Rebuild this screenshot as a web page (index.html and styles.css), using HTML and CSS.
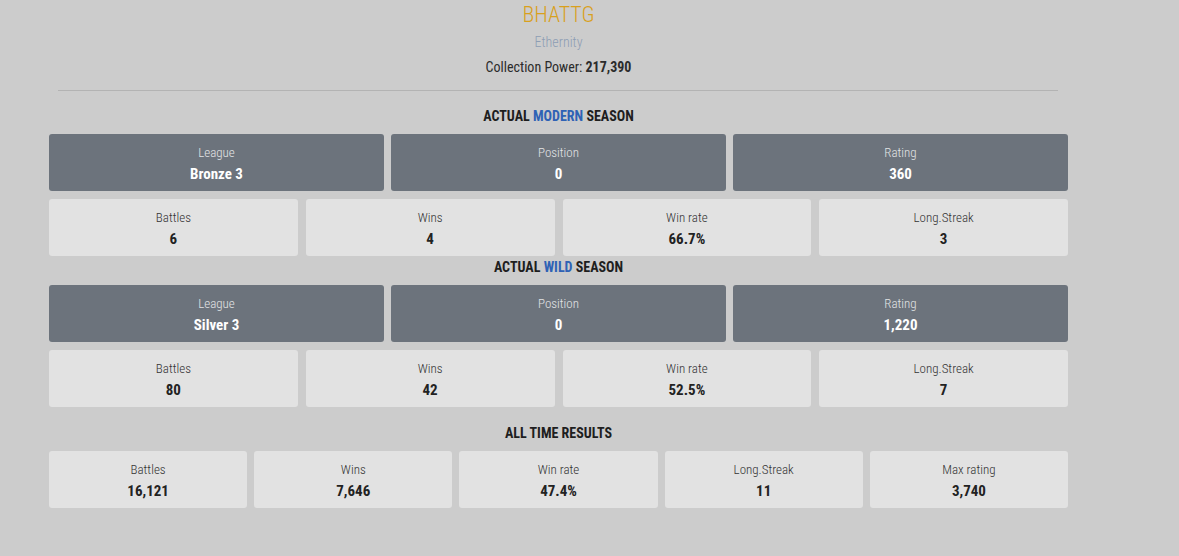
FILE: index.html
```html
<!DOCTYPE html>
<html>
<head>
<meta charset="utf-8">
<link rel="stylesheet" href="styles.css">
</head>
<body>
<div class="page">
  <div class="profile">
    <div class="name">BHATTG</div>
    <div class="guild">Ethernity</div>
    <div class="power">Collection Power: <b>217,390</b></div>
  </div>
  <div class="rule"></div>

  <section class="season">
    <h2 class="heading">ACTUAL <span class="hl">MODERN</span> SEASON</h2>
    <div class="row row-3">
      <div class="card dark"><div class="label">League</div><div class="value">Bronze 3</div></div>
      <div class="card dark"><div class="label">Position</div><div class="value">0</div></div>
      <div class="card dark"><div class="label">Rating</div><div class="value">360</div></div>
    </div>
    <div class="row row-4">
      <div class="card light"><div class="label">Battles</div><div class="value">6</div></div>
      <div class="card light"><div class="label">Wins</div><div class="value">4</div></div>
      <div class="card light"><div class="label">Win rate</div><div class="value">66.7%</div></div>
      <div class="card light"><div class="label">Long.Streak</div><div class="value">3</div></div>
    </div>
  </section>

  <section class="season tight">
    <h2 class="heading">ACTUAL <span class="hl">WILD</span> SEASON</h2>
    <div class="row row-3">
      <div class="card dark"><div class="label">League</div><div class="value">Silver 3</div></div>
      <div class="card dark"><div class="label">Position</div><div class="value">0</div></div>
      <div class="card dark"><div class="label">Rating</div><div class="value">1,220</div></div>
    </div>
    <div class="row row-4">
      <div class="card light"><div class="label">Battles</div><div class="value">80</div></div>
      <div class="card light"><div class="label">Wins</div><div class="value">42</div></div>
      <div class="card light"><div class="label">Win rate</div><div class="value">52.5%</div></div>
      <div class="card light"><div class="label">Long.Streak</div><div class="value">7</div></div>
    </div>
  </section>

  <section class="season alltime">
    <h2 class="heading">ALL TIME RESULTS</h2>
    <div class="row row-5">
      <div class="card light"><div class="label">Battles</div><div class="value">16,121</div></div>
      <div class="card light"><div class="label">Wins</div><div class="value">7,646</div></div>
      <div class="card light"><div class="label">Win rate</div><div class="value">47.4%</div></div>
      <div class="card light"><div class="label">Long.Streak</div><div class="value">11</div></div>
      <div class="card light"><div class="label">Max rating</div><div class="value">3,740</div></div>
    </div>
  </section>
</div>
</body>
</html>
```
FILE: styles.css
```css
html, body {
  margin: 0;
  padding: 0;
  background: #cccccc;
}
body {
  font-family: "Roboto", "DejaVu Sans Condensed", sans-serif;
  font-stretch: 75%;
  color: #222;
}
.page {
  width: 1019px;
  margin-left: 49px;
}
.profile {
  text-align: center;
}
.name {
  font-size: 22px;
  line-height: 30px;
  color: #d9a01c;
  font-weight: 300;
}
.guild {
  font-size: 14px;
  line-height: 20px;
  margin-top: 2px;
  color: #8d9db4;
  font-weight: 300;
}
.power {
  font-size: 14px;
  line-height: 20px;
  margin-top: 5px;
  color: #2b2b2b;
}
.power b {
  font-weight: 700;
}
.rule {
  height: 1px;
  background: #b3b3b3;
  margin: 13px 10px 0 9px;
}
.season {
  display: flex;
  flex-direction: column;
  gap: 8px;
  padding-top: 15px;
}
.season.tight {
  padding-top: 1px;
}
.season.alltime {
  padding-top: 16px;
}
.heading {
  margin: 0;
  font-size: 14px;
  line-height: 20px;
  font-weight: 700;
  text-align: center;
  color: #1e1e1e;
}
.hl {
  color: #2f62b5;
}
.row {
  display: grid;
}
.row-3 {
  grid-template-columns: repeat(3, 1fr);
  gap: 7px;
}
.row-4 {
  grid-template-columns: repeat(4, 1fr);
  gap: 8px;
}
.row-5 {
  grid-template-columns: repeat(5, 1fr);
  gap: 7px;
}
.card {
  border-radius: 3px;
  text-align: center;
  padding: 10px 0 5px;
}
.label {
  font-size: 13px;
  line-height: 18px;
  font-weight: 300;
}
.value {
  font-size: 15px;
  line-height: 23px;
  font-weight: 700;
  margin-top: 1px;
}
.dark {
  background: #6c737c;
}
.dark .label {
  color: #e2e4e6;
}
.dark .value {
  color: #ffffff;
}
.light {
  background: #e2e2e2;
}
.light .label {
  color: #333;
}
.light .value {
  color: #222;
}
```
